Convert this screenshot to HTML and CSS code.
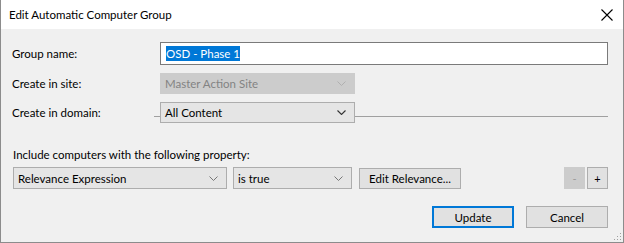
FILE: index.html
```html
<!DOCTYPE html>
<html lang="en">
<head>
    <meta charset="UTF-8">
    <title>Edit Automatic Computer Group</title>
    <link rel="stylesheet" href="styles.css">
</head>
<body>
    <div class="dialog">
        <div class="titlebar">
            <span class="title">Edit Automatic Computer Group</span>
            <svg class="close" width="12" height="12" viewBox="0 0 12 12">
                <path d="M0.5 0.5 L11.5 11.5 M11.5 0.5 L0.5 11.5" stroke="#000" stroke-width="1.1" fill="none"/>
            </svg>
        </div>

        <div class="content">
            <div class="form">
                <label class="lbl">Group name:</label>
                <div class="textbox"><span class="sel">OSD - Phase 1</span></div>

                <label class="lbl">Create in site:</label>
                <div class="combo combo-site disabled">
                    <span>Master Action Site</span>
                    <svg width="9" height="5" viewBox="0 0 9 5"><polyline points="0.5,0.5 4.5,4.5 8.5,0.5" fill="none" stroke="#b0b0b0" stroke-width="1"/></svg>
                </div>

                <label class="lbl">Create in domain:</label>
                <div class="domain-row">
                    <div class="stub"></div>
                    <div class="combo combo-site">
                        <span>All Content</span>
                        <svg width="9" height="5" viewBox="0 0 9 5"><polyline points="0.5,0.5 4.5,4.5 8.5,0.5" fill="none" stroke="#333" stroke-width="1.1"/></svg>
                    </div>
                    <div class="rule"></div>
                </div>
            </div>

            <div class="section">Include computers with the following property:</div>

            <div class="criteria">
                <div class="combo combo-prop">
                    <span>Relevance Expression</span>
                    <svg width="9" height="5" viewBox="0 0 9 5"><polyline points="0.5,0.5 4.5,4.5 8.5,0.5" fill="none" stroke="#777" stroke-width="1"/></svg>
                </div>
                <div class="combo combo-op">
                    <span>is true</span>
                    <svg width="9" height="5" viewBox="0 0 9 5"><polyline points="0.5,0.5 4.5,4.5 8.5,0.5" fill="none" stroke="#777" stroke-width="1"/></svg>
                </div>
                <button class="btn btn-edit">Edit Relevance...</button>
                <div class="spacer"></div>
                <button class="btn btn-small disabled">-</button>
                <button class="btn btn-small">+</button>
            </div>

            <div class="actions">
                <button class="btn btn-main default">Update</button>
                <button class="btn btn-main">Cancel</button>
            </div>
        </div>

        <svg class="grip" width="9" height="9" viewBox="0 0 9 9">
            <rect x="7" y="1" width="1" height="1" fill="#a0a0a0"/>
            <rect x="4" y="4" width="1" height="1" fill="#a0a0a0"/>
            <rect x="7" y="4" width="1" height="1" fill="#a0a0a0"/>
            <rect x="1" y="7" width="1" height="1" fill="#a0a0a0"/>
            <rect x="4" y="7" width="1" height="1" fill="#a0a0a0"/>
            <rect x="7" y="7" width="1" height="1" fill="#a0a0a0"/>
        </svg>
    </div>
</body>
</html>
```

FILE: styles.css
```css
* {
    box-sizing: border-box;
}
body {
    margin: 0;
    font-family: "Lato", "Noto Sans", sans-serif;
    font-size: 11.5px;
    color: #000;
}
.dialog {
    position: relative;
    width: 624px;
    height: 243px;
    background-color: #f0f0f0;
    border: 1px solid #8c8c8c;
    border-top: none;
}
.titlebar {
    height: 29px;
    background-color: #fff;
    display: flex;
    align-items: center;
    padding: 0 9px 0 8px;
}
.title {
    flex: 1;
    font-size: 11.5px;
}
.close {
    margin-right: 1px;
}
.content {
    padding: 13px 15px 0 10px;
}
.form {
    display: grid;
    grid-template-columns: 149px 1fr;
    grid-template-rows: 23px 21px 21px;
    row-gap: 8px;
    align-items: center;
}
.lbl {
    display: block;
    padding-left: 1px;
}
.textbox {
    height: 23px;
    background: #fff;
    border: 1px solid #7a7a7a;
    padding: 3px 0 0 5px;
    line-height: 15px;
}
.sel {
    background-color: #0078d7;
    color: #fff;
    padding: 1px 0;
}
.combo {
    height: 21px;
    display: flex;
    align-items: center;
    justify-content: space-between;
    padding: 0 8px 0 4px;
    background-color: #e5e5e5;
    border: 1px solid #adadad;
}
.combo-site {
    width: 195px;
}
.combo.disabled {
    background-color: #cccccc;
    border-color: #cccccc;
    color: #838383;
}
.domain-row {
    display: flex;
    align-items: flex-start;
    height: 21px;
}
.stub {
    width: 6px;
    height: 15px;
    margin-left: -6px;
    border-bottom: 1px solid #a0a0a0;
}
.rule {
    flex: 1;
    height: 15px;
    border-bottom: 1px solid #a0a0a0;
}
.section {
    margin-top: 24px;
    padding-left: 2px;
    line-height: 15px;
}
.criteria {
    display: flex;
    align-items: center;
    margin-top: 5px;
    padding-left: 2px;
    height: 22px;
}
.combo-prop {
    width: 214px;
    height: 22px;
    margin-right: 6px;
}
.combo-op {
    width: 119px;
    height: 22px;
    margin-right: 7px;
}
.btn {
    font-family: inherit;
    font-size: 11.5px;
    color: #000;
    background-color: #e1e1e1;
    border: 1px solid #adadad;
    padding: 0;
    margin: 0;
}
.btn-edit {
    width: 102px;
    height: 21px;
}
.spacer {
    flex: 1;
}
.btn-small {
    width: 21px;
    height: 22px;
    margin-left: 2px;
    font-size: 11px;
}
.btn-small.disabled {
    background-color: #cccccc;
    border-color: #cccccc;
    color: #9a9a9a;
}
.actions {
    display: flex;
    justify-content: flex-end;
    gap: 12px;
    margin-top: 17px;
}
.btn-main {
    width: 82px;
    height: 22px;
}
.btn-main.default {
    border: 2px solid #0078d7;
}
.grip {
    position: absolute;
    right: 1px;
    bottom: 1px;
}
```
